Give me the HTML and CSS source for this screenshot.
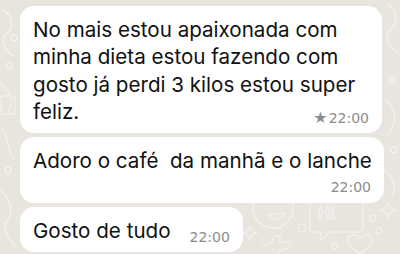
FILE: index.html
```html
<!DOCTYPE html>
<html lang="pt">
<head>
<meta charset="utf-8">
<link rel="stylesheet" href="styles.css">
</head>
<body>
<svg class="wallpaper" width="400" height="254" viewBox="0 0 400 254" aria-hidden="true">
  <g fill="none" stroke="#f2f0ec" stroke-width="1.4" stroke-linecap="round" stroke-linejoin="round">
    <path d="M2 10 C12 14 16 26 6 34 C0 40 4 52 14 56"/>
    <circle cx="14" cy="38" r="3"/>
    <circle cx="9" cy="66" r="3"/>
    <path d="M0 82 C8 90 16 100 8 112"/>
    <rect x="1" y="96" width="14" height="18" rx="3"/>
    <path d="M2 130 C10 138 6 150 14 158"/>
    <circle cx="8" cy="170" r="3"/>
    <path d="M0 190 C8 196 16 210 6 222 C2 228 8 240 16 246"/>
    <path d="M388 4 C398 10 398 24 390 30 C384 36 388 48 398 52"/>
    <circle cx="392" cy="80" r="3"/>
    <path d="M386 100 C396 110 398 122 388 134"/>
    <circle cx="394" cy="150" r="3"/>
    <path d="M384 170 C392 176 398 186 392 196"/>
    <circle cx="273" cy="208" r="20"/>
    <path d="M268 215 C272 221 282 221 285 213 Z"/>
    <path d="M310 232 L310 200 Q310 195 315 195 L358 195 Q363 195 363 200 L363 227 Q363 232 358 232 L330 232 L320 241 L321 232 L315 232 Q310 232 310 232"/>
    <circle cx="302" cy="228" r="4"/>
    <circle cx="335" cy="246" r="3"/>
    <circle cx="373" cy="218" r="3"/>
    <circle cx="379" cy="231" r="3"/>
    <path d="M250 226 Q251 232 257 233 Q251 234 250 240 Q249 234 243 233 Q249 232 250 226 Z"/>
    <path d="M388 202 Q389 209 396 210 Q389 211 388 218 Q387 211 380 210 Q387 209 388 202 Z"/>
    <path d="M262 246 L272 242 L274 236 L280 236 L280 242 L290 242 L290 248 L280 250 L278 256"/>
    <path d="M360 254 C350 246 344 240 350 236 C354 233 358 236 360 239 C362 236 368 233 371 237 C375 242 368 248 360 254"/>
  </g>
  <text x="318" y="219" class="wall-hi">HI</text>
</svg>
<main class="chat">
  <div class="bubble b1">
    <p class="text">No mais estou apaixonada com minha dieta estou fazendo com gosto já perdi 3 kilos estou super feliz.</p>
    <div class="meta meta-overlap"><span class="star">★</span><span class="time">22:00</span></div>
  </div>
  <div class="bubble b2">
    <p class="text nowrap">Adoro o café&nbsp; da manhã e o lanche</p>
    <div class="meta"><span class="time">22:00</span></div>
  </div>
  <div class="bubble b3">
    <p class="text">Gosto de tudo</p>
    <span class="time">22:00</span>
  </div>
</main>
</body>
</html>
```
FILE: styles.css
```css
html, body {
  margin: 0;
  padding: 0;
}
body {
  position: relative;
  background: #e8e5df;
  width: 400px;
  height: 254px;
  overflow: hidden;
  font-family: "Inter", "Liberation Sans", sans-serif;
  color: #111;
}
.wallpaper {
  position: absolute;
  left: 0;
  top: 0;
  z-index: 0;
}
.wall-hi {
  font-family: "Liberation Sans", sans-serif;
  font-size: 17px;
  font-weight: 700;
  fill: none;
  stroke: #f2f0ec;
  stroke-width: 1.2;
}
.chat {
  position: relative;
  z-index: 1;
  display: flex;
  flex-direction: column;
  align-items: flex-start;
  gap: 4px;
  padding: 6px 0 0 20px;
}
.bubble {
  background: #fff;
  border-radius: 14px;
  max-width: 362px;
  box-sizing: border-box;
  padding: 10px 13px 7px 13px;
}
.text {
  margin: 0;
  font-size: 20.6px;
  line-height: 27.3px;
}
.nowrap {
  white-space: nowrap;
}
.meta {
  display: flex;
  justify-content: flex-end;
  align-items: baseline;
  line-height: 16px;
}
.meta-overlap {
  margin-top: -15px;
}
.time {
  font-family: "DejaVu Sans", sans-serif;
  font-size: 14px;
  color: #8c8c8c;
  line-height: 16px;
}
.star {
  font-family: "DejaVu Sans", sans-serif;
  font-size: 16px;
  line-height: 16px;
  color: #8c8c8c;
  margin-right: 1px;
}
.b2 {
  max-width: 364px;
}
.b2 .meta {
  margin-top: 5px;
  padding-bottom: 1px;
}
.b3 {
  display: flex;
  align-items: flex-end;
  gap: 19px;
}
```
